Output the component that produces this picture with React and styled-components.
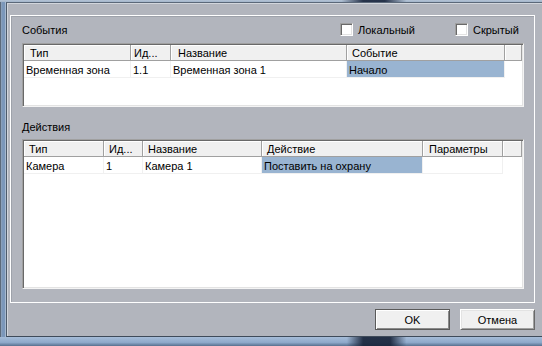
import React from 'react';
import styled, { createGlobalStyle } from 'styled-components';

const Global = createGlobalStyle`
  html, body { margin: 0; padding: 0; background: #b2b5bd; }
  body {
    font-family: "Liberation Sans", Arial, sans-serif;
    font-size: 11px;
    color: #000;
  }
  * { box-sizing: border-box; }
`;

const Window = styled.div`
  width: 542px;
  height: 346px;
  display: flex;
  flex-direction: column;
  overflow: hidden;
`;

const TopStrip = styled.div`
  flex: none;
  height: 2px;
  background:
    linear-gradient(90deg, transparent 0 63%, rgba(24, 36, 60, 0.9) 67%, rgba(24, 36, 60, 0.9) 71%, transparent 75%),
    linear-gradient(180deg, #b4c3d5, #a3b5ca);
`;

const Middle = styled.div`
  flex: 1;
  display: flex;
  min-height: 0;
`;

const LeftFrame = styled.div`
  flex: none;
  width: 6px;
  background: linear-gradient(90deg, #5c6a7b 0 1px, #8aa0bb 1px 2px, #7b97ba 2px 5px, #a7b9cf 5px 6px);
`;

const Client = styled.div`
  flex: 1;
  display: flex;
  flex-direction: column;
  background: #b2b5bd;
  border-top: 1px solid #5b6879;
  border-left: 1px solid #4d5a6a;
  border-bottom: 1px solid #3f4b5a;
  box-shadow: inset 1px 1px 0 #d2d6dc;
  padding: 12px 7px 0 3px;
`;

const BottomStrip = styled.div`
  flex: none;
  height: 9px;
  background:
    linear-gradient(90deg, transparent 0 64%, rgba(22, 34, 56, 0.9) 67%, rgba(22, 34, 56, 0.9) 72%, transparent 75%),
    linear-gradient(180deg, #a6bdd8 0, #8eaacb 60%, #56708f 100%);
`;

const GroupBox = styled.div`
  width: 525px;
  height: 288px;
  flex: none;
  border: 1px solid #ffffff;
  box-shadow: inset 1px 1px 0 #9ea2aa;
  padding: 0 10px 13px 11px;
  display: flex;
  flex-direction: column;
`;

const SectionHeader = styled.div`
  flex: none;
  height: ${p => p.$h}px;
  display: flex;
  align-items: ${p => (p.$bottom ? 'flex-end' : 'center')};
  padding-bottom: ${p => (p.$bottom ? 6 : 0)}px;
`;

const SectionLabel = styled.span`
  flex: 1;
  white-space: nowrap;
`;

const CheckItem = styled.label`
  flex: none;
  width: ${p => p.$w}px;
  display: flex;
  align-items: center;
  gap: 5px;
  white-space: nowrap;
`;

const CheckBox = styled.span`
  flex: none;
  width: 13px;
  height: 13px;
  background: #fff;
  border: 1px solid;
  border-color: #a0a0a0 #ffffff #ffffff #a0a0a0;
  box-shadow: inset 1px 1px 0 #696969, inset -1px -1px 0 #e3e3e3;
`;

const ListBox = styled.div`
  flex: none;
  height: ${p => p.$h}px;
  background: #fff;
  border: 1px solid;
  border-color: #a0a0a0 #f4f4f4 #f4f4f4 #a0a0a0;
  box-shadow: inset 1px 1px 0 #696969, inset -1px -1px 0 #e3e3e3;
  padding: 1px 1px 1px 1px;
  display: flex;
  flex-direction: column;
  overflow: hidden;
`;

const HeaderRow = styled.div`
  display: flex;
  height: 16px;
  flex: none;
`;

const HeaderCell = styled.div`
  flex: ${p => (p.$w ? `0 0 ${p.$w}px` : '1')};
  height: 16px;
  line-height: 16px;
  padding-left: ${p => p.$pad ?? 5}px;
  background: #f0f0f0;
  box-shadow: inset -1px -1px 0 #a0a0a0, inset 1px 1px 0 #ffffff;
  white-space: nowrap;
  overflow: hidden;
`;

const Row = styled.div`
  display: flex;
  height: 17px;
  flex: none;
`;

const Cell = styled.div`
  flex: 0 0 ${p => p.$w}px;
  height: 17px;
  line-height: 14px;
  padding: 2px 0 0 2px;
  border-right: 1px solid #f0f0f0;
  border-bottom: 1px solid #f0f0f0;
  background: ${p => (p.$sel ? '#99b4d1' : '#ffffff')};
  white-space: nowrap;
  overflow: hidden;
`;

const ButtonBar = styled.div`
  display: flex;
  justify-content: flex-end;
  gap: 10px;
  margin-top: 6px;
  padding-right: 0;
`;

const Button = styled.button`
  width: 75px;
  height: 21px;
  padding: 0;
  font-family: "Liberation Sans", Arial, sans-serif;
  font-size: 11px;
  color: #000;
  background: #f0f0f0;
  border: 1px solid;
  border-color: ${p => (p.$default ? '#5a5a5a' : '#ffffff #696969 #696969 #ffffff')};
  box-shadow: ${p =>
    p.$default
      ? 'inset 1px 1px 0 #ffffff, inset -1px -1px 0 #8a8a8a'
      : 'inset 1px 1px 0 #e3e3e3, inset -1px -1px 0 #a0a0a0'};
  display: flex;
  align-items: center;
  justify-content: center;
`;

const eventCols = [
  { title: 'Тип', w: 107, pad: 6 },
  { title: 'Ид...', w: 40, pad: 3 },
  { title: 'Название', w: 176, pad: 7 },
  { title: 'Событие', w: 158, pad: 5 },
];
const eventRows = [
  [{ t: 'Временная зона' }, { t: '1.1' }, { t: 'Временная зона 1' }, { t: 'Начало', sel: true }],
];

const actionCols = [
  { title: 'Тип', w: 80, pad: 5 },
  { title: 'Ид...', w: 39, pad: 5 },
  { title: 'Название', w: 119, pad: 5 },
  { title: 'Действие', w: 161, pad: 5 },
  { title: 'Параметры', w: 80, pad: 6 },
];
const actionRows = [
  [{ t: 'Камера' }, { t: '1' }, { t: 'Камера 1' }, { t: 'Поставить на охрану', sel: true }, { t: '' }],
];

function Table({ cols, rows, h }) {
  return (
    <ListBox $h={h}>
      <HeaderRow>
        {cols.map(c => (
          <HeaderCell key={c.title} $w={c.w} $pad={c.pad}>{c.title}</HeaderCell>
        ))}
        <HeaderCell />
      </HeaderRow>
      {rows.map((r, i) => (
        <Row key={i}>
          {r.map((cell, j) => (
            <Cell key={j} $w={cols[j].w} $sel={cell.sel}>{cell.t}</Cell>
          ))}
        </Row>
      ))}
    </ListBox>
  );
}

export default function App() {
  return (
    <>
      <Global />
      <Window>
        <TopStrip />
        <Middle>
          <LeftFrame />
          <Client>
            <GroupBox>
              <SectionHeader $h={27}>
                <SectionLabel>События</SectionLabel>
                <CheckItem $w={115}><CheckBox />Локальный</CheckItem>
                <CheckItem $w={69}><CheckBox />Скрытый</CheckItem>
              </SectionHeader>
              <Table cols={eventCols} rows={eventRows} h={64} />
              <SectionHeader $h={32} $bottom>
                <SectionLabel>Действия</SectionLabel>
              </SectionHeader>
              <Table cols={actionCols} rows={actionRows} h={150} />
            </GroupBox>
            <ButtonBar>
              <Button $default>OK</Button>
              <Button>Отмена</Button>
            </ButtonBar>
          </Client>
        </Middle>
        <BottomStrip />
      </Window>
    </>
  );
}
